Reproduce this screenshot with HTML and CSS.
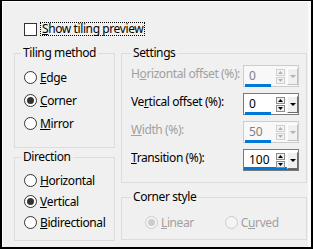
FILE: index.html
```html
<!DOCTYPE html>
<html>
  <head>
    <title>Tiling</title>
    <link rel="stylesheet" href="styles.css">
  </head>
  <body>
    <div class="dialog">
      <div class="preview">
        <span class="check"></span>
        <span class="focus"><u>S</u>how tiling preview</span>
      </div>
      <div class="columns">
        <div class="col-left">
          <fieldset class="group tiling">
            <legend>Tiling method</legend>
            <div class="radio"><span class="dot"></span><u>E</u>dge</div>
            <div class="radio"><span class="dot on"></span><u>C</u>orner</div>
            <div class="radio"><span class="dot"></span><u>M</u>irror</div>
          </fieldset>
          <fieldset class="group direction">
            <legend>Direction</legend>
            <div class="radio"><span class="dot"></span><u>H</u>orizontal</div>
            <div class="radio"><span class="dot on"></span><u>V</u>ertical</div>
            <div class="radio"><span class="dot"></span><u>B</u>idirectional</div>
          </fieldset>
        </div>
        <div class="col-right">
          <fieldset class="group settings">
            <legend>Settings</legend>
            <div class="row disabled">
              <span class="lbl">H<u>o</u>rizontal offset (%):</span>
              <div class="spin">
                <span class="field">0</span>
                <svg class="arrows" width="9" height="15" viewBox="0 0 9 15">
                  <rect x="0.5" y="0.5" width="8" height="6" fill="#f4f4f4" stroke="#d0d0d0"/>
                  <path d="M2 5h5L4.5 2z" fill="#b0b0b0"/>
                  <rect x="0.5" y="8.5" width="8" height="6" fill="#f4f4f4" stroke="#d0d0d0"/>
                  <path d="M2 10h5L4.5 13z" fill="#b0b0b0"/>
                </svg>
                <span class="drop"><span class="tri"></span></span>
              </div>
            </div>
            <div class="row">
              <span class="lbl">Ve<u>r</u>tical offset (%):</span>
              <div class="spin">
                <span class="field">0</span>
                <svg class="arrows" width="9" height="15" viewBox="0 0 9 15">
                  <rect x="0.5" y="0.5" width="8" height="6" fill="#f0f0f0" stroke="#8c8c8c"/>
                  <path d="M2 5h5L4.5 2z" fill="#000"/>
                  <rect x="0.5" y="8.5" width="8" height="6" fill="#f0f0f0" stroke="#8c8c8c"/>
                  <path d="M2 10h5L4.5 13z" fill="#000"/>
                </svg>
                <span class="drop"><span class="tri"></span></span>
              </div>
            </div>
            <div class="row disabled">
              <span class="lbl"><u>W</u>idth (%):</span>
              <div class="spin">
                <span class="field">50</span>
                <svg class="arrows" width="9" height="15" viewBox="0 0 9 15">
                  <rect x="0.5" y="0.5" width="8" height="6" fill="#f4f4f4" stroke="#d0d0d0"/>
                  <path d="M2 5h5L4.5 2z" fill="#b0b0b0"/>
                  <rect x="0.5" y="8.5" width="8" height="6" fill="#f4f4f4" stroke="#d0d0d0"/>
                  <path d="M2 10h5L4.5 13z" fill="#b0b0b0"/>
                </svg>
                <span class="drop"><span class="tri"></span></span>
              </div>
            </div>
            <div class="row">
              <span class="lbl"><u>T</u>ransition (%):</span>
              <div class="spin active">
                <span class="field">100</span>
                <svg class="arrows" width="9" height="15" viewBox="0 0 9 15">
                  <rect x="0.5" y="0.5" width="8" height="6" fill="#f0f0f0" stroke="#8c8c8c"/>
                  <path d="M2 5h5L4.5 2z" fill="#000"/>
                  <rect x="0.5" y="8.5" width="8" height="6" fill="#f0f0f0" stroke="#8c8c8c"/>
                  <path d="M2 10h5L4.5 13z" fill="#000"/>
                </svg>
                <span class="drop"><span class="tri"></span></span>
              </div>
            </div>
          </fieldset>
          <fieldset class="group corner">
            <legend>Corner style</legend>
            <div class="corner-row">
              <div class="radio disabled"><span class="dot on"></span><u>L</u>inear</div>
              <div class="radio disabled"><span class="dot"></span>C<u>u</u>rved</div>
            </div>
          </fieldset>
        </div>
      </div>
    </div>
  </body>
</html>
```

FILE: styles.css
```css
body {
  margin: 0;
  padding: 0;
  font-family: "Noto Sans", Arial, sans-serif;
  font-size: 12px;
  letter-spacing: -0.4px;
  color: #000;
}

u {
  text-decoration: underline;
  text-underline-offset: 1px;
}

.dialog {
  width: 313px;
  height: 249px;
  box-sizing: border-box;
  border: 2px solid #000;
  border-top-width: 1px;
  background-color: #f0f0f0;
  box-shadow: inset 1px 1px 0 #fff, inset -3px 0 0 #fafafa;
}

.preview {
  display: flex;
  align-items: center;
  height: 14px;
  margin-top: 21px;
  padding-left: 22px;
}

.check {
  width: 11px;
  height: 11px;
  border: 1px solid #333;
  background-color: #fff;
}

.focus {
  margin-left: 3px;
  padding: 0 1px;
  line-height: 12px;
  border: 1px dotted #000;
}

.columns {
  display: flex;
  margin-top: 10px;
  padding-left: 12px;
  gap: 6px;
}

.col-left {
  width: 101px;
}

.col-right {
  width: 186px;
}

.group {
  margin: 0;
  padding: 0 6px;
  border: 1px solid #dcdcdc;
  min-inline-size: 0;
}

.group legend {
  padding: 0 2px;
  line-height: 14px;
}

.tiling {
  padding-top: 6px;
  padding-bottom: 12px;
}

.tiling .radio {
  height: 23px;
}

.direction {
  margin-top: 2px;
  padding-top: 6px;
  padding-bottom: 7px;
}

.direction .radio {
  height: 21px;
}

.radio {
  display: flex;
  align-items: center;
  padding-left: 3px;
}

.dot {
  position: relative;
  width: 11px;
  height: 11px;
  margin-right: 3px;
  border: 1px solid #333;
  border-radius: 50%;
  background-color: #fff;
}

.dot.on::after {
  content: "";
  position: absolute;
  left: 2px;
  top: 2px;
  width: 7px;
  height: 7px;
  border-radius: 50%;
  background-color: #333;
}

.radio.disabled {
  color: #a0a0a0;
}

.radio.disabled .dot {
  border-color: #cccccc;
  background-color: #f4f4f4;
}

.radio.disabled .dot.on::after {
  background-color: #cccccc;
}

.settings {
  padding: 2px 7px 8px 9px;
}

.row {
  display: flex;
  align-items: center;
  justify-content: space-between;
  height: 28px;
}

.lbl {
  white-space: nowrap;
  margin-bottom: 5px;
}

.row.disabled .lbl {
  color: #a0a0a0;
}

.spin {
  display: flex;
  align-items: center;
  width: 56px;
  height: 22px;
  box-sizing: border-box;
  border: 1px solid #7a7a7a;
  background-color: #fff;
}

.row.disabled .spin {
  border-color: #cccccc;
  background-color: #f8f8f8;
}

.spin.active {
  box-shadow: inset 0 -3px 0 #0078d7;
}

.field {
  width: 22px;
  height: 17px;
  margin-left: 1px;
  margin-top: 1px;
  padding-left: 4px;
  line-height: 17px;
  letter-spacing: 0;
  border-bottom: 3px solid #0078d7;
}

.spin.active .field {
  border-bottom-color: transparent;
}

.row.disabled .field {
  color: #808080;
}

.arrows {
  margin-left: 5px;
}

.drop {
  display: flex;
  align-items: center;
  justify-content: center;
  width: 9px;
  height: 15px;
  margin-left: 2px;
  border: 1px solid;
  border-color: #fff #6d6d6d #6d6d6d #fff;
  background-color: #f0f0f0;
}

.tri {
  width: 0;
  height: 0;
  border-left: 3px solid transparent;
  border-right: 3px solid transparent;
  border-top: 3px solid #000;
}

.row.disabled .drop {
  border-color: #fff #c0c0c0 #c0c0c0 #fff;
}

.row.disabled .tri {
  border-top-color: #b0b0b0;
}

.corner {
  margin-top: 7px;
  padding: 8px 9px 6px 9px;
}

.corner-row {
  display: flex;
  gap: 28px;
  height: 21px;
  padding-left: 11px;
}
```
